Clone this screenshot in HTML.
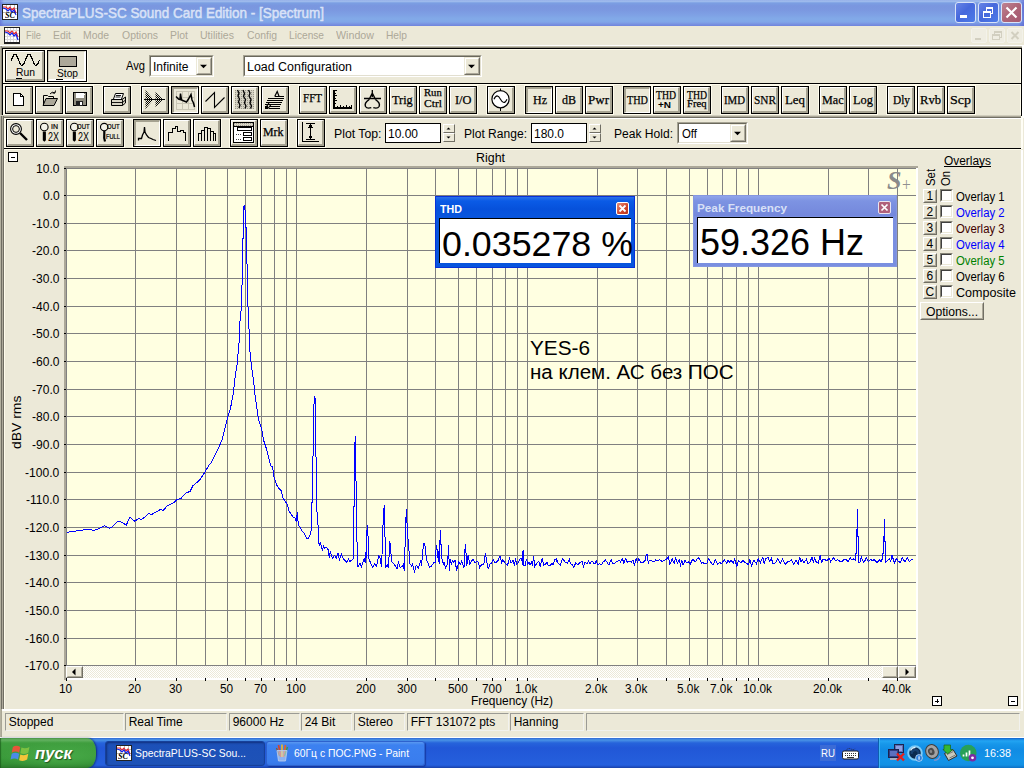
<!DOCTYPE html>
<html><head><meta charset="utf-8"><title>SpectraPLUS-SC</title>
<style>
html,body{margin:0;padding:0;}
body{width:1024px;height:768px;overflow:hidden;background:#ECE9D8;position:relative;font-family:"Liberation Sans",sans-serif;}
div,span.t,svg{position:absolute;box-sizing:border-box;}
span.t{white-space:pre;transform-origin:0 50%;display:block;}
.btn{background:#ECE9D8;border:1px solid #000;box-shadow:0 0 0 1px #FFFCEC;}
.btn:before{content:"";position:absolute;left:0;top:0;right:0;bottom:0;border-top:1px solid #fff;border-left:1px solid #fff;border-right:2px solid #A5A291;border-bottom:2px solid #A5A291;}
.btn.dn{background:#ECE9D8;}
.btn.dn:before{border-top:2px solid #A5A291;border-left:2px solid #A5A291;border-right:1px solid #fff;border-bottom:1px solid #fff;}
.btn.dn1:before{border-top:1px solid #C9C6B5;border-left:1px solid #C9C6B5;border-right:2px solid #fff;border-bottom:2px solid #fff;}
.flat{background:#fff;border:1px solid #000;}
.sunk{background:#fff;border:1px solid;border-color:#A5A292 #fff #fff #A5A292;}
.sunk:before{content:"";position:absolute;left:0;top:0;right:0;bottom:0;border:1px solid;border-color:#6A685C #E2DFD0 #E2DFD0 #6A685C;}
.cbtn{background:#ECE9D8;border:1px solid;border-color:#ECE9D8 #716F64 #716F64 #ECE9D8;}
.cbtn:before{content:"";position:absolute;left:0;top:0;right:0;bottom:0;border:1px solid;border-color:#fff #ACA899 #ACA899 #fff;}
.sp{background:#ECE9D8;border:1px solid;border-color:#fff #716F64 #716F64 #fff;}
.stp{border:1px solid;border-color:#9B9B95 #F2F2EE #F2F2EE #9B9B95;}
.chk{background:#fff;border:1px solid;border-color:#848275 #fff #fff #848275;}
.chk:before{content:"";position:absolute;left:0;top:0;right:0;bottom:0;border:1px solid;border-color:#404040 #ECE9D8 #ECE9D8 #404040;}
.sb{background:#ECE9D8;border:1px solid;border-color:#fff #716F64 #716F64 #fff;}
.sb:before{content:"";position:absolute;left:0;top:0;right:0;bottom:0;border:1px solid;border-color:#ECE9D8 #ACA899 #ACA899 #ECE9D8;}
.tbtn{border-radius:3px;border:1px solid #fff;}
</style></head><body>

<div style="left:0px;top:0px;width:1024px;height:26px;background:linear-gradient(180deg,#98B2EA 0px,#9DBAEC 1.5px,#86A8E6 2.5px,#7B9DE2 3.5px,#7A96DF 6px,#7B98E0 10px,#7E9FE4 14px,#82AAE8 19px,#80A5E8 22px,#778FE0 24.5px,#6E84DC 26px);"></div>
<div style="left:0px;top:0px;width:1024px;height:26px;background:linear-gradient(90deg,rgba(90,100,210,.6) 0px,rgba(90,100,210,0) 4px,rgba(90,100,210,0) 1018px,rgba(90,100,210,.7) 1024px);"></div>
<svg style="left:2px;top:4px" width="16" height="16" viewBox="0 0 16 16" shape-rendering="crispEdges">
<rect x="0" y="0" width="16" height="16" fill="#fff" stroke="none"/>
<path d="M0.5 0.5H15.5V15.5H0.5Z" fill="none" stroke="#222"/>
<path d="M4.5 1V9M8.5 1V9M12.5 1V9M1 4.5H15M1 8.5H15" stroke="#bbb" fill="none"/>
<polyline points="1,3 4,3 6,5 8,3 10,6 12,4 14,9" fill="none" stroke="#e22" stroke-width="1.1" shape-rendering="auto"/>
<polyline points="1,4 4,5 6,7 8,5 10,8 12,6 14,11" fill="none" stroke="#12e" stroke-width="1.2" shape-rendering="auto"/>
</svg>
<span class="t" style="left:5px;top:11.80px;font-size:8px;line-height:8px;color:#000;font-weight:bold;font-style:italic;font-family:'Liberation Serif',serif;transform:scaleX(1.0220);">SC</span>
<span class="t" style="left:22.3px;top:5.93px;font-size:14.5px;line-height:14.5px;color:#D9E2F7;transform:scaleX(0.9276);-webkit-text-stroke:.5px #D9E2F7;">SpectraPLUS-SC Sound Card Edition - [Spectrum]</span>
<div class="tbtn" style="left:955px;top:2px;width:21px;height:21px;background:linear-gradient(135deg,#6784E6 0%,#4668DC 45%,#4C7BE8 100%);border-color:#D9E3F8;"></div>
<div class="tbtn" style="left:978px;top:2px;width:21px;height:21px;background:linear-gradient(135deg,#6784E6 0%,#4668DC 45%,#4C7BE8 100%);border-color:#D9E3F8;"></div>
<div class="tbtn" style="left:1001px;top:2px;width:21px;height:21px;background:linear-gradient(135deg,#BE8392 0%,#AE6578 50%,#A55A72 100%);border-color:#D9E3F8;"></div>
<svg style="left:955px;top:2px" width="21" height="21" viewBox="0 0 21 21"><rect x="5" y="13" width="7" height="3" fill="#fff"/></svg>
<svg style="left:978px;top:2px" width="21" height="21" viewBox="0 0 21 21" shape-rendering="crispEdges"><path d="M8.500 9V6H14.500V11.500H12.500" fill="none" stroke="#fff"/><path d="M8 5.500H15" stroke="#fff"/><rect x="5.500" y="10" width="6.500" height="5" fill="none" stroke="#fff"/><path d="M5 9.500H12.500" stroke="#fff"/></svg>
<svg style="left:1001px;top:2px" width="21" height="21" viewBox="0 0 21 21"><path d="M5.5 5.5L15.5 15.5M15.5 5.5L5.5 15.5" stroke="#fff" stroke-width="2.2" fill="none"/></svg>
<svg style="left:4px;top:27px" width="16" height="17" viewBox="0 0 16 17" shape-rendering="crispEdges">
<rect x="0" y="0" width="16" height="17" fill="#fff"/>
<path d="M0.5 0.5H15.5V15.5H0.5Z" fill="none" stroke="#222"/><path d="M0 16H16" stroke="#222" stroke-width="2"/>
<path d="M3.5 1V15M6.5 1V15M9.5 1V15M12.5 1V15M1 3.5H15M1 6.5H15M1 9.5H15M1 12.5H15" stroke="#d8d8d8" fill="none"/>
<polyline points="1,4 4,4 6,6 8,4 10,7 12,5 14,10" fill="none" stroke="#e22" stroke-width="1.1" shape-rendering="auto"/>
<polyline points="1,5 4,6 6,8 8,6 10,9 12,7 14,13" fill="none" stroke="#12e" stroke-width="1.2" shape-rendering="auto"/>
</svg>
<span class="t" style="left:26px;top:29.69px;font-size:11px;line-height:11px;color:#ACA899;transform:scaleX(0.8463);">File</span>
<span class="t" style="left:53px;top:29.69px;font-size:11px;line-height:11px;color:#ACA899;transform:scaleX(0.9496);">Edit</span>
<span class="t" style="left:83px;top:29.69px;font-size:11px;line-height:11px;color:#ACA899;transform:scaleX(0.9450);">Mode</span>
<span class="t" style="left:122px;top:29.69px;font-size:11px;line-height:11px;color:#ACA899;transform:scaleX(0.9497);">Options</span>
<span class="t" style="left:170px;top:29.69px;font-size:11px;line-height:11px;color:#ACA899;transform:scaleX(0.9496);">Plot</span>
<span class="t" style="left:200px;top:29.69px;font-size:11px;line-height:11px;color:#ACA899;transform:scaleX(0.9591);">Utilities</span>
<span class="t" style="left:247px;top:29.69px;font-size:11px;line-height:11px;color:#ACA899;transform:scaleX(0.9435);">Config</span>
<span class="t" style="left:289px;top:29.69px;font-size:11px;line-height:11px;color:#ACA899;transform:scaleX(0.9232);">License</span>
<span class="t" style="left:336px;top:29.69px;font-size:11px;line-height:11px;color:#ACA899;transform:scaleX(0.9713);">Window</span>
<span class="t" style="left:386px;top:29.69px;font-size:11px;line-height:11px;color:#ACA899;transform:scaleX(0.9283);">Help</span>
<div style="left:971px;top:28px;width:16px;height:15px;background:#EFEDE2;border:1px solid #F3F2EA;border-radius:2px;"></div>
<div style="left:989px;top:28px;width:16px;height:15px;background:#EFEDE2;border:1px solid #F3F2EA;border-radius:2px;"></div>
<div style="left:1007px;top:28px;width:16px;height:15px;background:#EFEDE2;border:1px solid #F3F2EA;border-radius:2px;"></div>
<svg style="left:971px;top:28px" width="52" height="15" viewBox="0 0 52 15" shape-rendering="crispEdges"><rect x="4" y="10" width="6" height="2" fill="#D2CFC0"/><path d="M23.5 6.5V3.5H30.5V9.5H28.5M23 4.5H31" fill="none" stroke="#D2CFC0"/><rect x="21.5" y="6.5" width="7" height="5" fill="none" stroke="#D2CFC0"/><path d="M21 7.5H29" stroke="#D2CFC0"/></svg>
<svg style="left:1007px;top:28px" width="16" height="15" viewBox="0 0 16 15"><path d="M4.5 4L11.5 11M11.5 4L4.5 11" stroke="#D2CFC0" stroke-width="2" fill="none"/></svg>
<div style="left:0px;top:45px;width:1024px;height:1px;background:#fff;"></div>
<div style="left:0px;top:46px;width:1024px;height:1px;background:#C2BFAE;"></div>
<div style="left:0px;top:47px;width:1024px;height:1px;background:#8D8A7B;"></div>
<div style="left:0px;top:46px;width:1px;height:70px;background:#B5B2A1;"></div>
<div style="left:1px;top:46px;width:1px;height:70px;background:#8F8C7E;"></div>
<div style="left:2px;top:48px;width:1020px;height:68px;border:1px solid #000;border-bottom:none;background:#ECE9D8;"></div>
<div style="left:3px;top:49px;width:1018px;height:1px;background:#FFFCEC;"></div>
<div style="left:3px;top:49px;width:2px;height:66px;background:#FFFCEC;"></div>
<div style="left:1020px;top:49px;width:1px;height:66px;background:#FFFCEC;"></div>
<div style="left:1022px;top:46px;width:2px;height:72px;background:#fff;"></div>
<div style="left:3px;top:83px;width:1018px;height:1px;background:#000;"></div>
<div style="left:3px;top:84px;width:1018px;height:1px;background:#FFFCEC;"></div>
<div style="left:0px;top:115px;width:1021px;height:1px;background:#D0CDBC;"></div>
<div style="left:0px;top:116px;width:1021px;height:1px;background:#ACA899;"></div>
<div style="left:0px;top:117px;width:1021px;height:1px;background:#716F64;"></div>
<div style="left:4px;top:118px;width:1019px;height:1px;background:#fff;"></div>
<div style="left:1021px;top:116px;width:2px;height:33px;background:#FFFEF6;"></div>
<div style="left:0px;top:116px;width:1px;height:593px;background:#B5B2A1;"></div>
<div style="left:1px;top:116px;width:1px;height:593px;background:#716F64;"></div>
<div style="left:2px;top:116px;width:1px;height:593px;background:#ACA899;"></div>
<div style="left:3px;top:116px;width:1px;height:593px;background:#716F64;"></div>
<div style="left:4px;top:118px;width:2px;height:31px;background:#FFFCEC;"></div>
<div style="left:4px;top:149px;width:1px;height:560px;background:#FFFCEC;"></div>
<div style="left:4px;top:148px;width:1017px;height:1px;background:#000;"></div>
<div style="left:5px;top:149px;width:1016px;height:1px;background:#FFFCEC;"></div>
<div class="btn" style="left:5px;top:50px;width:40px;height:32px;"></div>
<svg style="left:0px;top:0px" width="50" height="82" viewBox="0 0 50 82"><polyline points="11.0,61.01 11.5,59.75 12.0,58.49 12.5,57.30 13.0,56.23 13.5,55.33 14.0,54.66 14.5,54.24 15.0,54.10 15.5,54.24 16.0,54.66 16.5,55.33 17.0,56.23 17.5,57.30 18.0,58.49 18.5,59.75 19.0,61.01 19.5,62.20 20.0,63.27 20.5,64.17 21.0,64.84 21.5,65.26 22.0,65.40 22.5,65.26 23.0,64.84 23.5,64.17 24.0,63.27 24.5,62.20 25.0,61.01 25.5,59.75 26.0,58.49 26.5,57.30 27.0,56.23 27.5,55.33 28.0,54.66 28.5,54.24 29.0,54.10 29.5,54.24 30.0,54.66 30.5,55.33 31.0,56.23 31.5,57.30 32.0,58.49 32.5,59.75 33.0,61.01 33.5,62.20 34.0,63.27 34.5,64.17 35.0,64.84 35.5,65.26 36.0,65.40 36.5,65.26 37.0,64.84 37.5,64.17 38.0,63.27 38.5,62.20 39.0,61.01 39.5,59.75" fill="none" stroke="#000" stroke-width="1.15" shape-rendering="crispEdges"/></svg>
<span class="t" style="left:16px;top:67.07px;font-size:11.5px;line-height:11.5px;color:#000;transform:scaleX(0.9007);">Run</span>
<div style="left:16px;top:78px;width:6px;height:1px;background:#000;"></div>
<div class="btn dn dn1" style="left:47px;top:50px;width:40px;height:32px;"></div>
<div style="left:59px;top:56px;width:18px;height:11px;background:#ACA899;border:1px solid #000;"></div>
<span class="t" style="left:56.7px;top:67.97px;font-size:11.5px;line-height:11.5px;color:#000;transform:scaleX(0.8877);">Stop</span>
<div style="left:56px;top:79px;width:7px;height:1px;background:#000;"></div>
<span class="t" style="left:126px;top:59.84px;font-size:12px;line-height:12px;color:#000;transform:scaleX(0.9286);">Avg</span>
<div class="sunk" style="left:149px;top:55px;width:65px;height:22px;"></div>
<span class="t" style="left:153px;top:60.84px;font-size:12px;line-height:12px;color:#000;transform:scaleX(1.0042);">Infinite</span>
<div class="cbtn" style="left:196px;top:57px;width:16px;height:18px;"></div>
<svg style="left:196px;top:57px" width="16" height="18" viewBox="0 0 16 18"><path d="M4 7.700H11L7.500 11.200Z" fill="#000"/></svg>
<div class="sunk" style="left:243px;top:55px;width:239px;height:22px;"></div>
<span class="t" style="left:247px;top:60.84px;font-size:12px;line-height:12px;color:#000;transform:scaleX(1.0355);">Load Configuration</span>
<div class="cbtn" style="left:464px;top:57px;width:16px;height:18px;"></div>
<svg style="left:464px;top:57px" width="16" height="18" viewBox="0 0 16 18"><path d="M4 7.700H11L7.500 11.200Z" fill="#000"/></svg>
<div class="btn" style="left:5px;top:86px;width:28px;height:28px;"></div>
<div class="btn" style="left:35px;top:86px;width:28px;height:28px;"></div>
<div class="btn" style="left:65px;top:86px;width:28px;height:28px;"></div>
<div class="btn" style="left:103px;top:86px;width:28px;height:28px;"></div>
<div class="btn" style="left:141px;top:86px;width:28px;height:28px;"></div>
<div class="btn dn" style="left:171px;top:86px;width:28px;height:28px;"></div>
<div class="btn" style="left:201px;top:86px;width:28px;height:28px;"></div>
<div class="btn" style="left:231px;top:86px;width:28px;height:28px;"></div>
<div class="btn" style="left:261px;top:86px;width:28px;height:28px;"></div>
<div class="btn" style="left:299px;top:86px;width:28px;height:28px;"></div>
<div class="btn" style="left:329px;top:86px;width:28px;height:28px;"></div>
<div class="btn" style="left:359px;top:86px;width:28px;height:28px;"></div>
<div class="btn" style="left:389px;top:86px;width:28px;height:28px;"></div>
<div class="btn" style="left:419px;top:86px;width:28px;height:28px;"></div>
<div class="btn" style="left:449px;top:86px;width:28px;height:28px;"></div>
<div class="btn" style="left:487px;top:86px;width:28px;height:28px;"></div>
<div class="btn dn" style="left:525px;top:86px;width:28px;height:28px;"></div>
<div class="btn" style="left:555px;top:86px;width:28px;height:28px;"></div>
<div class="btn" style="left:585px;top:86px;width:28px;height:28px;"></div>
<div class="btn dn" style="left:623px;top:86px;width:28px;height:28px;"></div>
<div class="btn" style="left:653px;top:86px;width:28px;height:28px;"></div>
<div class="btn" style="left:683px;top:86px;width:28px;height:28px;"></div>
<div class="btn" style="left:721px;top:86px;width:28px;height:28px;"></div>
<div class="btn" style="left:751px;top:86px;width:28px;height:28px;"></div>
<div class="btn" style="left:781px;top:86px;width:28px;height:28px;"></div>
<div class="btn" style="left:819px;top:86px;width:28px;height:28px;"></div>
<div class="btn" style="left:849px;top:86px;width:28px;height:28px;"></div>
<div class="btn" style="left:887px;top:86px;width:28px;height:28px;"></div>
<div class="btn" style="left:917px;top:86px;width:28px;height:28px;"></div>
<div class="btn" style="left:947px;top:86px;width:28px;height:28px;"></div>
<svg style="left:5px;top:86px" width="28" height="28" viewBox="0 0 28 28" shape-rendering="crispEdges"><path d="M8.5 7.5H15.5L18.5 10.5V19.5H8.5Z" fill="#fff" stroke="#000"/><path d="M15.5 7.5V10.5H18.5" fill="none" stroke="#000"/></svg>
<svg style="left:35px;top:85px" width="28" height="28" viewBox="0 0 28 28"><path d="M8 20.5L11 13.5H22.5L19 20.5Z" fill="#ACA899" stroke="#000"/><path d="M8.5 20V10.5H12.5L13.5 11.5H18.5V13" fill="none" stroke="#000"/><path d="M15 9Q17 6 20 8M20 8L20.5 5.5M20 8L17.5 8" fill="none" stroke="#000"/></svg>
<svg style="left:64.5px;top:85px" width="28" height="28" viewBox="0 0 28 28" shape-rendering="crispEdges"><rect x="8.5" y="7.5" width="13" height="13" fill="#8F8C7E" stroke="#000"/><rect x="10.500" y="8" width="8" height="5" fill="#fff"/><rect x="11" y="16" width="7" height="4.5" fill="#222"/><rect x="15" y="17" width="2" height="3" fill="#fff"/><rect x="19" y="9" width="1" height="1" fill="#fff"/></svg>
<svg style="left:103px;top:86px" width="28" height="28" viewBox="0 0 28 28"><path d="M10.5 13L12.5 7.5H20.500L18.500 13" fill="#fff" stroke="#000"/><path d="M8.5 13.5H19L22.500 11V17L19.500 19.500H8.5Z" fill="#D8D5C6" stroke="#000"/><path d="M8.5 16.5H19.500L22.500 14M19.500 13.5V19.500M13 9.500H18M12.500 11H17.500" fill="none" stroke="#000" stroke-width=".9"/></svg>
<svg style="left:141px;top:86px" width="28" height="28" viewBox="0 0 28 28"><path d="M3 13.500H24" stroke="#000" shape-rendering="crispEdges"/><path d="M4.500 4L12.500 13.500L4.500 23Z M14.500 6L22 13.500L14.500 21Z" fill="url(#hx)" stroke="none"/><defs><pattern id="hx" width="2" height="2" patternUnits="userSpaceOnUse"><rect width="1" height="1" fill="#000"/><rect x="1" y="1" width="1" height="1" fill="#000"/></pattern></defs></svg>
<svg style="left:171px;top:86px" width="28" height="28" viewBox="0 0 28 28"><rect x="5.500" y="5.500" width="18" height="18" fill="#ECE9D8" stroke="#C9C6B5" shape-rendering="crispEdges"/><path d="M11.500 5V23M17.500 5V23M5 11.500H23M5 17.500H23" stroke="#C9C6B5" fill="none" shape-rendering="crispEdges"/><polyline points="5,10.500 7.500,13 9,13.500 9.500,7.500 10.500,14 13,15 15.500,16 17.500,13 20,8.500 21,14 22.500,17 23.500,21" fill="none" stroke="#000" stroke-width="1.500"/></svg>
<svg style="left:201px;top:86px" width="28" height="28" viewBox="0 0 28 28"><polyline points="4.500,15.500 13.500,6.500 13.500,21.500 23.500,11.500" fill="none" stroke="#000" stroke-width="1.1"/></svg>
<svg style="left:231px;top:86px" width="28" height="28" viewBox="0 0 28 28"><rect x="4" y="4" width="19" height="19" fill="url(#dz)"/><defs><pattern id="dz" width="2" height="2" patternUnits="userSpaceOnUse"><rect width="2" height="2" fill="#D6D3C4"/><rect width="1" height="1" fill="#9A978A"/></pattern></defs><path d="M6.500 4L8 7L7 10L8.500 13L7.500 16L9 19L8 22M12 4L13.500 7.500L12.500 10.500L14.500 13.500L13.500 17L15 20L14 22.500M17.500 4L19 7L18 10L20 13.500L19 17L20.500 20L19.500 22.500" fill="none" stroke="#000" stroke-width="1.300"/></svg>
<svg style="left:261px;top:86px" width="28" height="28" viewBox="0 0 28 28"><path d="M13.700 10.500H22.500M6.900 12.500H23M5.600 14.500H22M5 16.500H21.200M4.400 18.500H20M8.700 20.500H19.400M7.500 22.500H18.700" stroke="#000" fill="none" shape-rendering="crispEdges"/><path d="M13.700 10.500L16.200 5.500L18.100 10.500M4.500 22L8 17M7 22.500L10 18.500" fill="none" stroke="#000" stroke-width="1.200"/><rect x="4" y="20" width="3" height="3" fill="#000"/></svg>
<span class="t" style="left:303px;top:93.17px;font-size:11.5px;line-height:11.5px;color:#000;font-family:'Liberation Serif',serif;transform:scaleX(0.9589);-webkit-text-stroke:.25px #000;">FFT</span>
<svg style="left:329px;top:86px" width="28" height="28" viewBox="0 0 28 28" shape-rendering="crispEdges"><path d="M5 4V22.500M4.500 22H23" stroke="#000" stroke-width="1.500" fill="none"/><path d="M5 4.500H8M5 7.500H7M5 9.500H8M5 12.500H7M5 14.500H8M5 17.500H7M8.500 22V20M11.500 22V19M14.500 22V20M17.500 22V19M20.500 22V20M22.500 22V19" fill="none" stroke="#000"/></svg>
<svg style="left:359px;top:86px" width="28" height="28" viewBox="0 0 28 28"><path d="M13.300 4V11M5 12.500H22M13.300 7L10 13.600M13.300 7L16.600 13.600" fill="none" stroke="#000" stroke-width="1.300"/><path d="M10 13.600Q5 17 6.500 20.500Q8 23 12.300 21.700M16.600 13.600Q21.600 17 20.100 20.500Q18.600 23 14.300 21.700" fill="none" stroke="#000" stroke-width="1.400"/></svg>
<span class="t" style="left:392.3px;top:93.53px;font-size:12.5px;line-height:12.5px;color:#000;font-family:'Liberation Serif',serif;transform:scaleX(0.9820);-webkit-text-stroke:.25px #000;">Trig</span>
<span class="t" style="left:424.3px;top:88.41px;font-size:10.5px;line-height:10.5px;color:#000;font-family:'Liberation Serif',serif;transform:scaleX(1.0169);-webkit-text-stroke:.25px #000;">Run</span>
<span class="t" style="left:424px;top:98.91px;font-size:10.5px;line-height:10.5px;color:#000;font-family:'Liberation Serif',serif;transform:scaleX(1.1020);-webkit-text-stroke:.25px #000;">Ctrl</span>
<span class="t" style="left:454.5px;top:93.53px;font-size:12.5px;line-height:12.5px;color:#000;font-family:'Liberation Serif',serif;transform:scaleX(0.9903);-webkit-text-stroke:.25px #000;">I/O</span>
<svg style="left:487px;top:86px" width="28" height="28" viewBox="0 0 28 28"><circle cx="13.500" cy="13.200" r="8.600" fill="#fff" stroke="#000" stroke-width="1.2"/><path d="M13.500 2.500V5M13.500 22V25" stroke="#000"/><path d="M7 13.200Q10 6.500 13.500 13.200T20 13.200" fill="none" stroke="#000" stroke-width="1.1"/></svg>
<span class="t" style="left:533.3px;top:93.53px;font-size:12.5px;line-height:12.5px;color:#000;font-family:'Liberation Serif',serif;transform:scaleX(0.9605);-webkit-text-stroke:.25px #000;">Hz</span>
<span class="t" style="left:561.5px;top:93.53px;font-size:12.5px;line-height:12.5px;color:#000;font-family:'Liberation Serif',serif;transform:scaleX(0.9597);-webkit-text-stroke:.25px #000;">dB</span>
<span class="t" style="left:588px;top:93.53px;font-size:12.5px;line-height:12.5px;color:#000;font-family:'Liberation Serif',serif;transform:scaleX(1.0427);-webkit-text-stroke:.25px #000;">Pwr</span>
<span class="t" style="left:627px;top:93.53px;font-size:12.5px;line-height:12.5px;color:#000;font-family:'Liberation Serif',serif;transform:scaleX(0.8175);-webkit-text-stroke:.25px #000;">THD</span>
<span class="t" style="left:724px;top:93.53px;font-size:12.5px;line-height:12.5px;color:#000;font-family:'Liberation Serif',serif;transform:scaleX(0.8640);-webkit-text-stroke:.25px #000;">IMD</span>
<span class="t" style="left:754px;top:93.53px;font-size:12.5px;line-height:12.5px;color:#000;font-family:'Liberation Serif',serif;transform:scaleX(0.9047);-webkit-text-stroke:.25px #000;">SNR</span>
<span class="t" style="left:785px;top:93.53px;font-size:12.5px;line-height:12.5px;color:#000;font-family:'Liberation Serif',serif;transform:scaleX(1.0291);-webkit-text-stroke:.25px #000;">Leq</span>
<span class="t" style="left:822px;top:93.53px;font-size:12.5px;line-height:12.5px;color:#000;font-family:'Liberation Serif',serif;transform:scaleX(0.9679);-webkit-text-stroke:.25px #000;">Mac</span>
<span class="t" style="left:853px;top:93.53px;font-size:12.5px;line-height:12.5px;color:#000;font-family:'Liberation Serif',serif;transform:scaleX(0.9933);-webkit-text-stroke:.25px #000;">Log</span>
<span class="t" style="left:893px;top:93.53px;font-size:12.5px;line-height:12.5px;color:#000;font-family:'Liberation Serif',serif;transform:scaleX(0.9067);-webkit-text-stroke:.25px #000;">Dly</span>
<span class="t" style="left:920px;top:93.53px;font-size:12.5px;line-height:12.5px;color:#000;font-family:'Liberation Serif',serif;transform:scaleX(1.0078);-webkit-text-stroke:.25px #000;">Rvb</span>
<span class="t" style="left:950px;top:93.53px;font-size:12.5px;line-height:12.5px;color:#000;font-family:'Liberation Serif',serif;transform:scaleX(1.1200);-webkit-text-stroke:.25px #000;">Scp</span>
<span class="t" style="left:656.3px;top:88.75px;font-size:12px;line-height:12px;color:#000;font-family:'Liberation Serif',serif;transform:scaleX(0.8110);-webkit-text-stroke:.25px #000;">THD</span>
<span class="t" style="left:658px;top:101.20px;font-size:8.5px;line-height:8.5px;color:#000;font-weight:bold;transform:scaleX(1.1708);">+N</span>
<span class="t" style="left:687.3px;top:88.55px;font-size:12px;line-height:12px;color:#000;font-family:'Liberation Serif',serif;transform:scaleX(0.8110);-webkit-text-stroke:.25px #000;">THD</span>
<span class="t" style="left:687.3px;top:99.22px;font-size:10px;line-height:10px;color:#000;font-family:'Liberation Serif',serif;transform:scaleX(1.0693);-webkit-text-stroke:.25px #000;">Freq</span>
<div class="btn" style="left:6px;top:119px;width:28px;height:28px;"></div>
<div class="btn" style="left:36px;top:119px;width:28px;height:28px;"></div>
<div class="btn" style="left:66px;top:119px;width:28px;height:28px;"></div>
<div class="btn" style="left:96px;top:119px;width:28px;height:28px;"></div>
<div class="btn dn" style="left:133px;top:119px;width:28px;height:28px;"></div>
<div class="btn" style="left:163px;top:119px;width:28px;height:28px;"></div>
<div class="btn" style="left:193px;top:119px;width:28px;height:28px;"></div>
<div class="btn" style="left:230px;top:119px;width:28px;height:28px;"></div>
<div class="btn" style="left:260px;top:119px;width:28px;height:28px;"></div>
<div class="btn" style="left:297px;top:119px;width:28px;height:28px;"></div>
<svg style="left:6px;top:119px" width="28" height="28" viewBox="0 0 28 28"><path d="M14 14L21 21" stroke="#000" stroke-width="2.400" fill="none"/><circle cx="10" cy="10" r="5.400" fill="#fff" stroke="#000" stroke-width="1.100"/><circle cx="10" cy="10" r="3.400" fill="#ECE9D8" stroke="#000" stroke-width="1"/></svg>
<svg style="left:36px;top:119px" width="28" height="28" viewBox="0 0 28 28"><path d="M6.800 12.500H9.900V21.300L8.350 22.800L6.800 21.300Z" fill="#000"/><circle cx="8.300" cy="8" r="3.800" fill="#F4F3EA" stroke="#000" stroke-width="1.100"/></svg>
<span class="t" style="left:51px;top:123.83px;font-size:6.7px;line-height:6.7px;color:#000;transform:scaleX(1.0448);-webkit-text-stroke:.2px #000;">IN</span>
<span class="t" style="left:48px;top:131.44px;font-size:12px;line-height:12px;color:#000;transform:scaleX(0.7494);">2X</span>
<svg style="left:66px;top:119px" width="28" height="28" viewBox="0 0 28 28"><path d="M6.800 12.500H9.900V21.300L8.350 22.800L6.800 21.300Z" fill="#000"/><circle cx="8.300" cy="8" r="3.800" fill="#F4F3EA" stroke="#000" stroke-width="1.100"/></svg>
<span class="t" style="left:77.2px;top:123.93px;font-size:6.7px;line-height:6.7px;color:#000;transform:scaleX(0.8909);-webkit-text-stroke:.2px #000;">OUT</span>
<span class="t" style="left:78px;top:131.44px;font-size:12px;line-height:12px;color:#000;transform:scaleX(0.7494);">2X</span>
<svg style="left:96px;top:119px" width="28" height="28" viewBox="0 0 28 28"><path d="M8.300 12L8.300 15Q7.800 18.500 9 22.500" stroke="#000" stroke-width="2.200" fill="none"/><circle cx="8.200" cy="8.100" r="3.700" fill="#F4F3EA" stroke="#000" stroke-width="1.100"/></svg>
<span class="t" style="left:107.2px;top:123.93px;font-size:6.7px;line-height:6.7px;color:#000;transform:scaleX(0.8909);-webkit-text-stroke:.2px #000;">OUT</span>
<span class="t" style="left:106.2px;top:132.97px;font-size:7px;line-height:7px;color:#000;transform:scaleX(0.8063);-webkit-text-stroke:.2px #000;">FULL</span>
<svg style="left:133px;top:119px" width="28" height="28" viewBox="0 0 28 28"><polyline points="5.500,21.500 5.500,19.500 8.500,19.500 9.500,16 11,13 11.500,8 12,13 13.500,16 15.500,18.500 18,19.500 20,20.500 23,21.500" fill="none" stroke="#000" stroke-width="1.300"/></svg>
<svg style="left:163px;top:119px" width="28" height="28" viewBox="0 0 28 28" shape-rendering="crispEdges"><path d="M5.500 22V13.500H9.500V9.500H12.500V7.500H14.500V12.500H17.500V11H20.500V13.500H22.500V22" fill="none" stroke="#000"/></svg>
<svg style="left:193px;top:119px" width="28" height="28" viewBox="0 0 28 28" shape-rendering="crispEdges"><path d="M5.500 22V14.500H8.500V22M8.500 14.500V11.500H11.500V22M11.500 11.500V8.500H14.500V22M14.500 9.500H17.500V22M17.500 12.500H20.500V22M20.500 14.500H22.500V22" fill="none" stroke="#000"/></svg>
<svg style="left:230px;top:119px" width="28" height="28" viewBox="0 0 28 28" shape-rendering="crispEdges"><rect x="3.500" y="3.500" width="20" height="20" fill="#fff" stroke="#000"/><rect x="4" y="4" width="19" height="3" fill="url(#dz)"/><path d="M4 7.500H23" stroke="#000"/><rect x="7.500" y="8.500" width="14" height="3" fill="#fff" stroke="#000"/><rect x="13.500" y="13.500" width="8" height="3" fill="#fff" stroke="#000"/><rect x="13.500" y="18.500" width="8" height="3" fill="#fff" stroke="#000"/><path d="M6 15.500H11M6 20.500H11" stroke="#444" stroke-dasharray="1 1"/></svg>
<span class="t" style="left:263.3px;top:126.45px;font-size:12px;line-height:12px;color:#000;font-family:'Liberation Serif',serif;transform:scaleX(0.9920);-webkit-text-stroke:.25px #000;">Mrk</span>
<svg style="left:297px;top:119px" width="28" height="28" viewBox="0 0 28 28" shape-rendering="crispEdges"><path d="M5.500 3V22.500H21.500" fill="none" stroke="#000"/><path d="M9 4.500H18M9 20.500H18M13.500 5V20" stroke="#000" fill="none"/><path d="M13.500 5L11 8.500H16ZM13.500 20L11 16.500H16Z" fill="#000"/></svg>
<span class="t" style="left:334px;top:127.84px;font-size:12px;line-height:12px;color:#000;transform:scaleX(1.0221);">Plot Top:</span>
<div class="flat" style="left:385px;top:123px;width:56px;height:20px;"></div>
<span class="t" style="left:388px;top:127.64px;font-size:12px;line-height:12px;color:#000;transform:scaleX(0.9991);">10.00</span>
<span class="t" style="left:464px;top:127.84px;font-size:12px;line-height:12px;color:#000;transform:scaleX(1.0047);">Plot Range:</span>
<div class="flat" style="left:531px;top:123px;width:56px;height:20px;"></div>
<span class="t" style="left:534px;top:127.64px;font-size:12px;line-height:12px;color:#000;transform:scaleX(0.9991);">180.0</span>
<div class="sp" style="left:443px;top:124px;width:12px;height:9px;"></div>
<div class="sp" style="left:443px;top:133px;width:12px;height:9px;"></div>
<svg style="left:443px;top:124px" width="12" height="18" viewBox="0 0 12 18"><path d="M3.500 5.500H7.500L5.500 3.500Z M3.500 12.500H7.500L5.500 14.500Z" fill="#000"/></svg>
<div class="sp" style="left:589px;top:124px;width:12px;height:9px;"></div>
<div class="sp" style="left:589px;top:133px;width:12px;height:9px;"></div>
<svg style="left:589px;top:124px" width="12" height="18" viewBox="0 0 12 18"><path d="M3.500 5.500H7.500L5.500 3.500Z M3.500 12.500H7.500L5.500 14.500Z" fill="#000"/></svg>
<span class="t" style="left:614px;top:127.84px;font-size:12px;line-height:12px;color:#000;transform:scaleX(1.0052);">Peak Hold:</span>
<div class="sunk" style="left:677px;top:122px;width:71px;height:22px;"></div>
<span class="t" style="left:681.5px;top:127.64px;font-size:12px;line-height:12px;color:#000;transform:scaleX(0.9503);">Off</span>
<div class="cbtn" style="left:730px;top:124px;width:16px;height:18px;"></div>
<svg style="left:730px;top:124px" width="16" height="18" viewBox="0 0 16 18"><path d="M4 7.700H11L7.500 11.200Z" fill="#000"/></svg>
<div style="left:1021px;top:150px;width:2px;height:559px;background:#fff;"></div>
<div style="left:8px;top:152px;width:10px;height:10px;border:1px solid #000;background:#fff;"></div>
<div style="left:11px;top:156.5px;width:4px;height:1px;background:#000;"></div>
<span class="t" style="left:476px;top:151.84px;font-size:12px;line-height:12px;color:#000;transform:scaleX(1.0353);">Right</span>
<div style="left:64px;top:166px;width:854px;height:514px;background:#ACA899;"></div>
<div style="left:66px;top:168px;width:852px;height:512px;background:#fff;"></div>
<div style="left:66px;top:168px;width:850px;height:510px;background:#808080;"></div>
<div style="left:67px;top:169px;width:849px;height:496px;background:#FFFFE1;"></div>
<svg style="left:60px;top:160px" width="860" height="525" viewBox="60 160 860 525"><path d="M135.5 169V665M176.5 169V665M205.5 169V665M227.5 169V665M245.5 169V665M261.5 169V665M274.5 169V665M286.5 169V665M296.5 169V665M366.5 169V665M407.5 169V665M435.5 169V665M458.5 169V665M476.5 169V665M492.5 169V665M505.5 169V665M517.5 169V665M527.5 169V665M597.5 169V665M637.5 169V665M666.5 169V665M689.5 169V665M707.5 169V665M722.5 169V665M736.5 169V665M748.5 169V665M758.5 169V665M828.5 169V665M868.5 169V665M897.5 169V665M67 195.5H916M67 223.5H916M67 250.5H916M67 278.5H916M67 306.5H916M67 333.5H916M67 361.5H916M67 389.5H916M67 416.5H916M67 444.5H916M67 472.5H916M67 499.5H916M67 527.5H916M67 555.5H916M67 582.5H916M67 610.5H916M67 638.5H916" stroke="#808080" stroke-width="1" fill="none" shape-rendering="crispEdges"/><path d="M64 168.5H66M64 195.5H66M64 223.5H66M64 250.5H66M64 278.5H66M64 306.5H66M64 333.5H66M64 361.5H66M64 389.5H66M64 416.5H66M64 444.5H66M64 472.5H66M64 499.5H66M64 527.5H66M64 555.5H66M64 582.5H66M64 610.5H66M64 638.5H66M64 665.5H66" stroke="#000" stroke-width="1" fill="none" shape-rendering="crispEdges"/><polyline points="66.7,532.2 71.7,531.7 85.0,529.7 90.8,529.7 93.3,530.5 97.5,529.2 104.2,525.8 109.5,528.3 112.5,526.7 117.5,521.7 120.0,521.3 126.3,525.0 130.0,517.2 134.7,521.3 138.7,518.3 141.2,519.7 145.0,517.0 148.8,513.3 151.2,514.7 160.8,509.2 163.3,510.5 167.5,505.5 173.3,503.0 177.2,499.5 180.8,498.7 186.2,492.5 190.0,491.7 192.8,485.8 199.2,480.5 202.8,475.5 205.8,470.5 208.8,465.3 211.3,462.5 216.7,451.7 221.7,440.8 226.2,423.4 227.9,416.7 230.5,408.2 233.4,393.0 235.0,377.7 237.2,364.2 238.1,353.2 239.5,337.0 239.5,323.5 240.3,320.0 240.3,311.5 241.1,311.0 241.3,285.7 242.3,284.8 242.3,239.1 243.3,238.0 243.3,209.5 244.3,205.2 245.4,212.9 245.7,227.2 246.6,227.6 246.6,263.6 247.4,264.1 247.6,306.5 248.6,307.2 248.6,320.0 249.1,330.3 249.6,348.1 250.8,360.8 253.8,382.8 255.0,394.7 258.3,418.3 259.3,421.8 261.5,428.5 263.5,440.0 265.8,446.7 270.8,465.8 272.5,466.7 274.2,478.3 277.5,486.7 281.3,490.8 282.8,497.9 287.2,504.2 289.1,511.3 293.0,517.0 295.5,518.3 296.2,521.5 297.4,511.9 298.3,525.3 300.6,527.8 302.5,531.7 304.4,533.6 306.4,538.0 308.3,538.7 310.2,534.9 311.5,528.5 311.5,503.0 312.4,502.3 312.4,456.7 313.4,455.8 313.4,414.2 314.4,397.0 315.5,399.2 315.5,456.7 316.6,457.5 316.6,511.9 317.5,512.5 317.8,524.7 318.5,525.3 318.5,541.2 319.5,545.7 320.1,542.1 322.6,550.8 323.3,545.3 324.9,548.3 326.1,547.0 328.1,549.5 329.3,557.8 330.2,551.4 332.5,558.5 334.4,555.3 336.3,558.1 338.0,553.1 339.5,560.4 341.2,554.0 343.4,559.1 346.6,562.3 348.5,559.1 349.7,561.7 352.9,559.1 353.6,556.5 353.6,506.8 354.5,506.2 354.5,447.5 355.5,436.2 355.5,480.8 356.7,481.7 356.8,541.9 357.7,542.5 358.0,567.4 359.9,562.9 361.6,566.8 363.8,559.7 364.7,561.7 365.7,552.1 365.9,562.9 366.6,533.6 367.6,524.9 368.2,541.2 368.9,559.1 372.7,567.4 374.6,563.6 376.5,566.1 378.7,555.9 379.7,556.5 381.6,567.4 382.5,540.0 383.5,510.6 384.6,505.1 384.6,536.1 385.5,537.4 385.5,567.4 387.1,564.8 388.7,568.0 389.5,541.2 390.6,545.1 391.3,561.0 393.8,563.6 397.0,568.7 398.3,562.3 400.2,567.4 402.0,566.8 403.4,564.2 404.3,570.6 405.3,537.4 406.3,509.3 407.2,525.9 407.5,538.7 408.5,539.3 408.9,550.8 409.8,551.4 409.8,563.6 411.7,566.1 412.7,564.2 414.5,572.5 415.5,566.8 416.8,565.5 418.3,568.0 420.6,561.0 421.5,565.5 422.5,554.0 423.6,543.2 424.5,543.8 425.5,548.9 426.4,559.1 429.6,567.4 431.5,566.1 434.0,562.3 435.3,562.3 436.3,545.1 437.5,552.1 437.9,557.8 438.5,551.4 439.1,563.6 440.4,530.1 441.0,545.1 441.4,543.8 442.1,560.4 443.6,564.2 444.2,561.7 445.5,568.0 447.2,564.2 448.1,555.3 448.4,545.1 449.0,559.1 449.3,570.6 450.0,559.1 451.2,564.2 452.5,560.4 453.8,562.3 455.1,560.4 456.6,570.6 457.6,566.8 458.9,561.7 460.2,564.8 461.7,561.0 464.0,567.4 465.3,543.8 466.3,556.5 466.8,565.5 468.1,555.3 469.7,564.2 472.9,559.1 474.8,562.9 476.8,561.0 478.0,561.7 479.7,567.4 481.9,564.2 483.8,564.8 485.4,553.0 487.0,562.9 488.2,568.7 490.2,563.6 491.5,563.6 493.1,559.4 495.3,562.9 497.8,561.0 500.0,555.9 501.6,562.9 502.9,559.7 505.5,563.6 507.4,565.5 509.5,558.5 511.2,562.9 513.1,560.4 514.4,564.8 515.7,559.7 516.9,564.2 518.9,561.7 520.0,558.8 521.9,558.8 522.2,565.0 523.1,550.0 523.8,565.0 525.6,565.0 526.2,558.8 527.8,563.8 529.0,561.9 530.2,565.0 531.5,562.5 532.5,566.2 533.5,556.0 534.8,566.2 536.9,563.1 538.8,561.2 540.2,566.2 542.2,558.8 543.8,565.0 545.6,564.4 546.9,561.9 548.1,565.0 550.0,566.2 551.9,563.1 553.1,565.0 555.0,558.8 556.2,560.6 556.5,558.5 558.1,563.1 560.2,565.0 562.5,558.8 565.0,561.9 567.5,563.1 569.4,559.4 570.6,563.8 572.2,564.4 573.8,567.2 575.6,563.1 578.1,564.4 580.0,562.5 581.9,561.2 583.5,566.5 585.0,561.9 586.9,563.8 588.5,561.2 590.0,563.8 591.9,561.0 593.8,563.1 595.0,563.8 596.2,560.6 597.5,564.4 600.0,563.8 601.2,565.0 603.1,562.2 605.6,560.0 607.5,563.1 609.0,565.0 611.2,559.4 612.5,563.1 615.0,563.1 616.9,561.2 619.4,560.6 620.6,561.9 622.5,558.8 623.8,563.1 625.6,558.8 627.5,562.5 629.4,561.2 631.2,562.2 633.1,560.0 634.4,565.0 636.2,558.8 637.5,561.9 638.8,558.8 640.6,562.5 643.1,562.5 645.0,560.6 646.2,555.0 647.3,554.8 648.2,563.0 649.5,560.1 652.0,561.1 654.5,561.6 655.8,559.9 657.4,561.0 659.9,559.7 662.4,561.7 664.3,560.2 666.2,559.5 668.4,557.1 670.0,564.4 672.2,559.0 674.1,563.4 675.4,558.2 677.6,563.2 679.2,559.8 680.5,565.1 681.8,560.5 683.1,565.0 685.0,560.5 686.3,562.7 688.5,561.8 690.4,563.7 692.9,558.9 695.1,562.0 697.3,558.8 698.9,557.6 701.4,563.1 702.7,562.5 704.6,564.0 706.8,563.9 708.4,558.3 710.3,561.4 712.2,564.0 713.5,564.2 715.4,559.6 717.6,564.0 719.8,562.7 721.7,563.6 724.2,559.7 726.7,563.3 728.0,559.9 729.3,562.1 731.2,560.4 733.1,563.3 734.7,559.0 736.9,566.5 738.5,560.3 740.7,562.7 743.2,560.1 744.5,562.1 747.0,563.6 748.6,564.7 749.9,559.6 751.5,565.5 754.0,560.2 756.5,564.0 758.1,558.6 760.3,562.9 762.8,557.5 764.4,564.1 765.7,558.5 768.2,557.2 769.5,561.1 771.4,558.4 773.0,563.7 775.5,562.8 777.7,558.8 780.2,563.4 782.7,559.1 785.2,564.3 787.7,561.6 789.0,561.7 791.5,559.7 793.7,564.5 795.9,560.1 798.1,564.1 799.7,556.7 801.0,561.7 802.3,559.3 803.9,562.9 806.4,559.4 808.0,563.7 809.6,562.6 812.1,557.2 813.4,562.0 814.7,557.7 816.3,562.3 818.2,563.3 820.1,555.4 821.4,562.6 823.0,559.6 824.9,559.5 827.1,561.0 829.0,557.9 830.6,561.8 832.2,559.8 833.5,558.0 835.7,560.7 837.6,559.6 839.8,561.1 842.0,561.7 843.9,559.8 846.4,559.5 848.0,561.8 850.2,557.8 851.5,559.9 854.0,558.8 855.5,560.0 855.5,554.0 856.5,553.5 856.5,529.0 857.5,529.0 857.5,509.0 857.5,536.0 858.5,536.0 858.5,562.0 859.7,562.8 861.3,557.2 863.8,562.8 866.3,557.9 868.2,561.6 870.7,559.5 872.6,560.9 873.9,559.3 875.5,560.8 877.1,562.7 879.6,559.8 881.2,561.6 882.2,559.0 882.6,553.0 883.5,553.0 883.5,536.0 884.5,536.0 884.5,519.0 884.5,541.0 885.5,541.0 885.5,562.0 886.6,561.7 889.1,558.7 890.7,561.5 892.0,555.5 894.5,563.0 896.1,558.4 898.0,561.0 900.2,562.4 902.4,557.8 904.9,562.1 907.1,557.7 909.6,561.7 911.5,559.7 913.5,559.5" fill="none" stroke="#0000FF" stroke-width="1" stroke-linejoin="miter" shape-rendering="crispEdges"/></svg>
<span class="t" style="left:36.03010937500001px;top:162.54px;font-size:12px;line-height:12px;color:#000;transform:scaleX(1.0050);">10.0</span>
<span class="t" style="left:42.7366px;top:189.54px;font-size:12px;line-height:12px;color:#000;transform:scaleX(1.0050);">0.0</span>
<span class="t" style="left:32.014506250000004px;top:217.54px;font-size:12px;line-height:12px;color:#000;transform:scaleX(1.0050);">-10.0</span>
<span class="t" style="left:32.014506250000004px;top:244.54px;font-size:12px;line-height:12px;color:#000;transform:scaleX(1.0050);">-20.0</span>
<span class="t" style="left:32.014506250000004px;top:272.54px;font-size:12px;line-height:12px;color:#000;transform:scaleX(1.0050);">-30.0</span>
<span class="t" style="left:32.014506250000004px;top:300.54px;font-size:12px;line-height:12px;color:#000;transform:scaleX(1.0050);">-40.0</span>
<span class="t" style="left:32.014506250000004px;top:327.54px;font-size:12px;line-height:12px;color:#000;transform:scaleX(1.0050);">-50.0</span>
<span class="t" style="left:32.014506250000004px;top:355.54px;font-size:12px;line-height:12px;color:#000;transform:scaleX(1.0050);">-60.0</span>
<span class="t" style="left:32.014506250000004px;top:383.54px;font-size:12px;line-height:12px;color:#000;transform:scaleX(1.0050);">-70.0</span>
<span class="t" style="left:32.014506250000004px;top:410.54px;font-size:12px;line-height:12px;color:#000;transform:scaleX(1.0050);">-80.0</span>
<span class="t" style="left:32.014506250000004px;top:438.54px;font-size:12px;line-height:12px;color:#000;transform:scaleX(1.0050);">-90.0</span>
<span class="t" style="left:25.308015625000003px;top:466.54px;font-size:12px;line-height:12px;color:#000;transform:scaleX(1.0050);">-100.0</span>
<span class="t" style="left:26.20309375px;top:493.54px;font-size:12px;line-height:12px;color:#000;transform:scaleX(1.0050);">-110.0</span>
<span class="t" style="left:25.308015625000003px;top:521.54px;font-size:12px;line-height:12px;color:#000;transform:scaleX(1.0050);">-120.0</span>
<span class="t" style="left:25.308015625000003px;top:549.54px;font-size:12px;line-height:12px;color:#000;transform:scaleX(1.0050);">-130.0</span>
<span class="t" style="left:25.308015625000003px;top:576.54px;font-size:12px;line-height:12px;color:#000;transform:scaleX(1.0050);">-140.0</span>
<span class="t" style="left:25.308015625000003px;top:604.54px;font-size:12px;line-height:12px;color:#000;transform:scaleX(1.0050);">-150.0</span>
<span class="t" style="left:25.308015625000003px;top:632.54px;font-size:12px;line-height:12px;color:#000;transform:scaleX(1.0050);">-160.0</span>
<span class="t" style="left:25.308015625000003px;top:659.54px;font-size:12px;line-height:12px;color:#000;transform:scaleX(1.0050);">-170.0</span>
<span class="t" style="left:10px;top:449px;font-size:13px;line-height:13px;color:#000;transform-origin:0 0;transform:rotate(-90deg) scaleX(1.07);">dBV rms</span>
<div style="left:67px;top:666px;width:849px;height:12px;background:#F6F5EF;background-image:repeating-conic-gradient(#ECE9D8 0% 25%,#fff 0% 50%);background-size:2px 2px;"></div>
<div class="sb" style="left:66px;top:666px;width:17px;height:12px;"></div>
<div class="sb" style="left:898px;top:666px;width:18px;height:12px;"></div>
<div class="sb" style="left:882px;top:666px;width:16px;height:12px;"></div>
<svg style="left:66px;top:666px" width="17" height="12" viewBox="0 0 17 12"><path d="M9.5 2.5V9.5L6 6Z" fill="#000"/></svg>
<svg style="left:898px;top:666px" width="18" height="12" viewBox="0 0 18 12"><path d="M7.5 2.5V9.5L11 6Z" fill="#000"/></svg>
<svg style="left:0;top:0" width="1024" height="700" viewBox="0 0 1024 700" shape-rendering="crispEdges"><rect x="66" y="678" width="1" height="3" fill="#000"/><rect x="135" y="678" width="1" height="3" fill="#000"/><rect x="176" y="678" width="1" height="3" fill="#000"/><rect x="205" y="678" width="1" height="3" fill="#000"/><rect x="227" y="678" width="1" height="3" fill="#000"/><rect x="245" y="678" width="1" height="3" fill="#000"/><rect x="261" y="678" width="1" height="3" fill="#000"/><rect x="274" y="678" width="1" height="3" fill="#000"/><rect x="286" y="678" width="1" height="3" fill="#000"/><rect x="296" y="678" width="1" height="3" fill="#000"/><rect x="366" y="678" width="1" height="3" fill="#000"/><rect x="407" y="678" width="1" height="3" fill="#000"/><rect x="435" y="678" width="1" height="3" fill="#000"/><rect x="458" y="678" width="1" height="3" fill="#000"/><rect x="476" y="678" width="1" height="3" fill="#000"/><rect x="492" y="678" width="1" height="3" fill="#000"/><rect x="505" y="678" width="1" height="3" fill="#000"/><rect x="517" y="678" width="1" height="3" fill="#000"/><rect x="527" y="678" width="1" height="3" fill="#000"/><rect x="597" y="678" width="1" height="3" fill="#000"/><rect x="637" y="678" width="1" height="3" fill="#000"/><rect x="666" y="678" width="1" height="3" fill="#000"/><rect x="689" y="678" width="1" height="3" fill="#000"/><rect x="707" y="678" width="1" height="3" fill="#000"/><rect x="722" y="678" width="1" height="3" fill="#000"/><rect x="736" y="678" width="1" height="3" fill="#000"/><rect x="748" y="678" width="1" height="3" fill="#000"/><rect x="758" y="678" width="1" height="3" fill="#000"/><rect x="828" y="678" width="1" height="3" fill="#000"/><rect x="868" y="678" width="1" height="3" fill="#000"/><rect x="897" y="678" width="1" height="3" fill="#000"/></svg>
<span class="t" style="left:58.926971875px;top:682.64px;font-size:12px;line-height:12px;color:#000;transform:scaleX(0.9850);">10</span>
<span class="t" style="left:127.92697187499999px;top:682.64px;font-size:12px;line-height:12px;color:#000;transform:scaleX(0.9850);">20</span>
<span class="t" style="left:168.926971875px;top:682.64px;font-size:12px;line-height:12px;color:#000;transform:scaleX(0.9850);">30</span>
<span class="t" style="left:219.926971875px;top:682.64px;font-size:12px;line-height:12px;color:#000;transform:scaleX(0.9850);">50</span>
<span class="t" style="left:253.926971875px;top:682.64px;font-size:12px;line-height:12px;color:#000;transform:scaleX(0.9850);">70</span>
<span class="t" style="left:285.6404578125px;top:682.64px;font-size:12px;line-height:12px;color:#000;transform:scaleX(0.9850);">100</span>
<span class="t" style="left:355.6404578125px;top:682.64px;font-size:12px;line-height:12px;color:#000;transform:scaleX(0.9850);">200</span>
<span class="t" style="left:396.6404578125px;top:682.64px;font-size:12px;line-height:12px;color:#000;transform:scaleX(0.9850);">300</span>
<span class="t" style="left:447.6404578125px;top:682.64px;font-size:12px;line-height:12px;color:#000;transform:scaleX(0.9850);">500</span>
<span class="t" style="left:481.6404578125px;top:682.64px;font-size:12px;line-height:12px;color:#000;transform:scaleX(0.9850);">700</span>
<span class="t" style="left:515.3301px;top:682.64px;font-size:12px;line-height:12px;color:#000;transform:scaleX(0.9850);">1.0k</span>
<span class="t" style="left:585.3301px;top:682.64px;font-size:12px;line-height:12px;color:#000;transform:scaleX(0.9850);">2.0k</span>
<span class="t" style="left:625.3301px;top:682.64px;font-size:12px;line-height:12px;color:#000;transform:scaleX(0.9850);">3.0k</span>
<span class="t" style="left:677.3301px;top:682.64px;font-size:12px;line-height:12px;color:#000;transform:scaleX(0.9850);">5.0k</span>
<span class="t" style="left:710.3301px;top:682.64px;font-size:12px;line-height:12px;color:#000;transform:scaleX(0.9850);">7.0k</span>
<span class="t" style="left:743.0435859375px;top:682.64px;font-size:12px;line-height:12px;color:#000;transform:scaleX(0.9850);">10.0k</span>
<span class="t" style="left:813.0435859375px;top:682.64px;font-size:12px;line-height:12px;color:#000;transform:scaleX(0.9850);">20.0k</span>
<span class="t" style="left:882.0435859375px;top:682.64px;font-size:12px;line-height:12px;color:#000;transform:scaleX(0.9850);">40.0k</span>
<span class="t" style="left:471px;top:695.14px;font-size:12px;line-height:12px;color:#000;transform:scaleX(0.9918);">Frequency (Hz)</span>
<div style="left:932px;top:696px;width:10px;height:10px;border:1px solid #000;background:#fff;"></div>
<div style="left:935px;top:700.5px;width:4px;height:1px;background:#000;"></div>
<div style="left:936.5px;top:699px;width:1px;height:4px;background:#000;"></div>
<div style="left:1008px;top:696px;width:10px;height:10px;border:1px solid #000;background:#fff;"></div>
<div style="left:1011px;top:700.5px;width:4px;height:1px;background:#000;"></div>
<span class="t" style="left:944px;top:154.84px;font-size:12px;line-height:12px;color:#000;transform:scaleX(0.9928);">Overlays</span>
<div style="left:944px;top:166px;width:47px;height:1px;background:#000;"></div>
<span class="t" style="left:925px;top:186px;font-size:12px;line-height:12px;color:#000;transform-origin:0 0;transform:rotate(-90deg) scaleX(.95);">Set</span>
<span class="t" style="left:940px;top:186px;font-size:12px;line-height:12px;color:#000;transform-origin:0 0;transform:rotate(-90deg) scaleX(.95);">On</span>
<div class="sb" style="left:923px;top:189px;width:14px;height:14px;"></div>
<span class="t" style="left:926.5px;top:190.24px;font-size:12px;line-height:12px;color:#000;">1</span>
<div class="chk" style="left:940px;top:189px;width:13px;height:13px;"></div>
<span class="t" style="left:956px;top:190.74px;font-size:12px;line-height:12px;color:#000;transform:scaleX(0.9465);">Overlay 1</span>
<div class="sb" style="left:923px;top:205px;width:14px;height:14px;"></div>
<span class="t" style="left:926.5px;top:206.24px;font-size:12px;line-height:12px;color:#000;">2</span>
<div class="chk" style="left:940px;top:205px;width:13px;height:13px;"></div>
<span class="t" style="left:956px;top:206.74px;font-size:12px;line-height:12px;color:#0000FF;transform:scaleX(0.9465);">Overlay 2</span>
<div class="sb" style="left:923px;top:221px;width:14px;height:14px;"></div>
<span class="t" style="left:926.5px;top:222.24px;font-size:12px;line-height:12px;color:#000;">3</span>
<div class="chk" style="left:940px;top:221px;width:13px;height:13px;"></div>
<span class="t" style="left:956px;top:222.74px;font-size:12px;line-height:12px;color:#400000;transform:scaleX(0.9465);">Overlay 3</span>
<div class="sb" style="left:923px;top:237px;width:14px;height:14px;"></div>
<span class="t" style="left:926.5px;top:238.24px;font-size:12px;line-height:12px;color:#000;">4</span>
<div class="chk" style="left:940px;top:237px;width:13px;height:13px;"></div>
<span class="t" style="left:956px;top:238.74px;font-size:12px;line-height:12px;color:#0000FF;transform:scaleX(0.9465);">Overlay 4</span>
<div class="sb" style="left:923px;top:253px;width:14px;height:14px;"></div>
<span class="t" style="left:926.5px;top:254.24px;font-size:12px;line-height:12px;color:#000;">5</span>
<div class="chk" style="left:940px;top:253px;width:13px;height:13px;"></div>
<span class="t" style="left:956px;top:254.74px;font-size:12px;line-height:12px;color:#008000;transform:scaleX(0.9465);">Overlay 5</span>
<div class="sb" style="left:923px;top:269px;width:14px;height:14px;"></div>
<span class="t" style="left:926.5px;top:270.24px;font-size:12px;line-height:12px;color:#000;">6</span>
<div class="chk" style="left:940px;top:269px;width:13px;height:13px;"></div>
<span class="t" style="left:956px;top:270.74px;font-size:12px;line-height:12px;color:#000;transform:scaleX(0.9465);">Overlay 6</span>
<div class="sb" style="left:923px;top:285px;width:14px;height:14px;"></div>
<span class="t" style="left:925.5px;top:286.24px;font-size:12px;line-height:12px;color:#000;">C</span>
<div class="chk" style="left:940px;top:285px;width:13px;height:13px;"></div>
<span class="t" style="left:956px;top:286.74px;font-size:12px;line-height:12px;color:#000;transform:scaleX(1.0461);">Composite</span>
<div class="sb" style="left:920px;top:302px;width:64px;height:18px;"></div>
<span class="t" style="left:926px;top:305.54px;font-size:12px;line-height:12px;color:#000;transform:scaleX(1.0126);">Options...</span>
<div style="left:435px;top:196px;width:200px;height:72px;background:#0855DD;border:1px solid #0831D9;"></div>
<div style="left:436px;top:197px;width:198px;height:20px;background:linear-gradient(180deg,#2B71E8 0,#0A5BE6 4px,#0651DB 12px,#0855DD 19px);"></div>
<span class="t" style="left:440px;top:203.69px;font-size:11px;line-height:11px;color:#fff;font-weight:bold;transform:scaleX(0.9732);">THD</span>
<div style="left:616px;top:202px;width:13px;height:13px;background:linear-gradient(135deg,#E8907A,#D0452A 60%,#B8371F);border:1px solid #fff;border-radius:2px;"></div>
<svg style="left:616px;top:202px" width="13" height="13" viewBox="0 0 13 13"><path d="M3.5 3.5L9.5 9.5M9.5 3.5L3.5 9.5" stroke="#fff" stroke-width="1.8" fill="none"/></svg>
<div style="left:439px;top:218px;width:192px;height:45px;background:#fff;border-top:1px solid #000;border-left:1px solid #000;"></div>
<span class="t" style="left:442px;top:226.37px;font-size:35px;line-height:35px;color:#000;transform:scaleX(1.0224);">0.035278 %</span>
<div style="left:693px;top:195px;width:204px;height:72px;background:#7A8FE0;border:1px solid #8597E0;"></div>
<div style="left:694px;top:196px;width:202px;height:20px;background:linear-gradient(180deg,#8FA4EA 0,#7D93E2 5px,#7488DC 19px);"></div>
<span class="t" style="left:697px;top:202.69px;font-size:11px;line-height:11px;color:#D8E0F6;font-weight:bold;transform:scaleX(1.0668);">Peak Frequency</span>
<div style="left:878px;top:201px;width:13px;height:13px;background:#B0607A;border:1px solid #E9E4F0;border-radius:2px;"></div>
<svg style="left:878px;top:201px" width="13" height="13" viewBox="0 0 13 13"><path d="M3.500 3.500L9.500 9.500M9.500 3.500L3.500 9.500" stroke="#fff" stroke-width="1.7" fill="none"/></svg>
<div style="left:697px;top:217px;width:196px;height:46px;background:#fff;border-top:1px solid #000;border-left:1px solid #000;"></div>
<span class="t" style="left:700px;top:225.13px;font-size:36px;line-height:36px;color:#000;transform:scaleX(0.9994);">59.326 Hz</span>
<span class="t" style="left:529.5px;top:337.57px;font-size:20px;line-height:20px;color:#000;transform:scaleX(1.0380);">YES-6</span>
<span class="t" style="left:529.5px;top:361.57px;font-size:20px;line-height:20px;color:#000;transform:scaleX(1.0264);">на клем. АС без ПОС</span>
<span class="t" style="left:886.5px;top:167.53px;font-size:26px;line-height:26px;color:#8A8A8A;font-weight:bold;font-style:italic;font-family:'Liberation Serif',serif;transform:scaleX(1.0029);">S</span>
<span class="t" style="left:900.5px;top:174.59px;font-size:19px;line-height:19px;color:#909090;font-style:italic;font-family:'Liberation Serif',serif;transform:scaleX(0.8189);">+</span>
<div style="left:0px;top:711px;width:1024px;height:27px;background:#ECE9D8;"></div>
<div style="left:2px;top:709px;width:1021px;height:2px;background:#fff;"></div>
<div style="left:0px;top:709px;width:1px;height:28px;background:#B5B2A1;"></div>
<div style="left:1px;top:709px;width:1px;height:28px;background:#A9A695;"></div>
<div class="stp" style="left:5px;top:713px;width:119px;height:18px;"></div>
<span class="t" style="left:8.7px;top:715.54px;font-size:12px;line-height:12px;color:#000;transform:scaleX(1.0000);">Stopped</span>
<div class="stp" style="left:125px;top:713px;width:102px;height:18px;"></div>
<span class="t" style="left:128.7px;top:715.54px;font-size:12px;line-height:12px;color:#000;transform:scaleX(1.0000);">Real Time</span>
<div class="stp" style="left:229px;top:713px;width:71px;height:18px;"></div>
<span class="t" style="left:232.7px;top:715.54px;font-size:12px;line-height:12px;color:#000;transform:scaleX(1.0000);">96000 Hz</span>
<div class="stp" style="left:301px;top:713px;width:51px;height:18px;"></div>
<span class="t" style="left:304.7px;top:715.54px;font-size:12px;line-height:12px;color:#000;transform:scaleX(1.0000);">24 Bit</span>
<div class="stp" style="left:354px;top:713px;width:51px;height:18px;"></div>
<span class="t" style="left:357.7px;top:715.54px;font-size:12px;line-height:12px;color:#000;transform:scaleX(1.0000);">Stereo</span>
<div class="stp" style="left:407px;top:713px;width:102px;height:18px;"></div>
<span class="t" style="left:410.7px;top:715.54px;font-size:12px;line-height:12px;color:#000;transform:scaleX(1.0000);">FFT 131072 pts</span>
<div class="stp" style="left:510px;top:713px;width:74px;height:18px;"></div>
<span class="t" style="left:513.7px;top:715.54px;font-size:12px;line-height:12px;color:#000;transform:scaleX(1.0000);">Hanning</span>
<div class="stp" style="left:586px;top:713px;width:434px;height:18px;"></div>
<div style="left:0px;top:737px;width:1024px;height:1px;background:#fff;"></div>
<div style="left:0px;top:738px;width:1024px;height:30px;background:linear-gradient(180deg,#3168D5 0,#4993E6 2px,#2663DB 5px,#2157D7 10px,#245DDB 22px,#2560DE 27px,#1F50C6 28.5px,#1941A5 30px);"></div>
<div style="left:0px;top:738px;width:96px;height:30px;background:radial-gradient(ellipse 60px 14px at 60px 18px,#48AA48 0,rgba(72,170,72,0) 100%),linear-gradient(180deg,#4E9A4C 0,#62B160 2px,#3F9E3E 5px,#3A9A3A 20px,#338E34 26px,#2B7A2C 30px);border-radius:0 9px 9px 0/0 13px 13px 0;box-shadow:1px 0 2px rgba(0,20,60,.6),inset 1px 0 1px rgba(20,80,20,.6);"></div>
<svg style="left:10px;top:743px" width="20" height="20" viewBox="-0.500 1 17.500 16.500">
<path d="M2 4Q5 2 8.500 4L7.500 9Q4.500 7 1 9Z" fill="#E8553A"/><path d="M9.500 4.500Q13 6 16.500 4L15.500 9Q12 11 8.500 9.500Z" fill="#7CC142"/>
<path d="M1 10Q4 8 7.500 10L6.500 15Q3.500 13 0 15Z" fill="#4A8BE8"/><path d="M8.500 10.500Q12 12 15.500 10L14.500 15Q11 17 7.500 15.500Z" fill="#F5C53A"/></svg>
<span class="t" style="left:35px;top:744.61px;font-size:17px;line-height:17px;color:#fff;font-weight:bold;font-style:italic;transform:scaleX(0.9761);text-shadow:1px 1px 1px rgba(0,0,0,.5);">пуск</span>
<div style="left:105px;top:741px;width:160px;height:25px;background:linear-gradient(180deg,#1C50B8 0,#1E52B7 100%);border-radius:3px;border:1px solid #16409A;box-shadow:inset 1px 1px 2px rgba(0,0,40,.4);"></div>
<svg style="left:116px;top:745px" width="16" height="16" viewBox="0 0 16 16" shape-rendering="crispEdges"><rect width="16" height="16" fill="#fff"/><path d="M0.500 0.500H15.500V15.500H0.500Z" fill="none" stroke="#222"/><path d="M4.500 1V9M8.500 1V9M12.500 1V9M1 4.500H15M1 8.500H15" stroke="#bbb" fill="none"/><polyline points="1,3 4,3 6,5 8,3 10,6 12,4 14,9" fill="none" stroke="#e22" stroke-width="1.1" shape-rendering="auto"/><polyline points="1,4 4,5 6,7 8,5 10,8 12,6 14,11" fill="none" stroke="#12e" stroke-width="1.2" shape-rendering="auto"/></svg>
<span class="t" style="left:118px;top:753.30px;font-size:8px;line-height:8px;color:#000;font-weight:bold;font-style:italic;font-family:'Liberation Serif',serif;transform:scaleX(1.0220);">SC</span>
<span class="t" style="left:135px;top:747.69px;font-size:11px;line-height:11px;color:#fff;transform:scaleX(0.9456);">SpectraPLUS-SC Sou...</span>
<div style="left:266px;top:741px;width:159px;height:25px;background:linear-gradient(180deg,#5A98F0 0,#3C81F0 3px,#3A7DEE 20px,#3573E0 25px);border-radius:3px;border:1px solid #2D62CE;box-shadow:1px 1px 1px rgba(10,30,120,.5);"></div>
<svg style="left:274px;top:744px" width="16" height="18" viewBox="0 0 16 18"><path d="M4.500 1L7 13" stroke="#D8432A" stroke-width="1.700"/><path d="M8 0.500L8 13" stroke="#E8B82A" stroke-width="1.700"/><path d="M11.500 1L9.500 13" stroke="#E8602A" stroke-width="1.700"/><path d="M13.500 3L10.500 12" stroke="#3C9A4A" stroke-width="1.400"/><path d="M2.500 4L5.500 12" stroke="#8A5A2A" stroke-width="1.300"/><path d="M3 6.500H13L11.500 17H4.500Z" fill="rgba(205,220,245,.55)" stroke="#B8C8E8" stroke-width=".9"/></svg>
<span class="t" style="left:294.3px;top:747.69px;font-size:11px;line-height:11px;color:#fff;transform:scaleX(0.9407);">60Гц с ПОС.PNG - Paint</span>
<div style="left:820px;top:745px;width:16px;height:16px;background:#3B6BD6;"></div>
<span class="t" style="left:821px;top:747.99px;font-size:11px;line-height:11px;color:#fff;transform:scaleX(0.8812);">RU</span>
<svg style="left:842px;top:747px" width="18" height="13" viewBox="0 0 18 12"><rect x="0.500" y="3.500" width="16" height="8" rx="1.500" fill="#fff" stroke="#222"/><path d="M3 6H14M3 8H14" stroke="#333" stroke-dasharray="1 1"/><path d="M5 10H12" stroke="#333"/><path d="M4 3Q6 0 9 1.500T13 1" fill="none" stroke="#222" stroke-width=".8" stroke-dasharray="1 1"/></svg>
<div style="left:878px;top:738px;width:146px;height:30px;background:linear-gradient(180deg,#1560CB 0,#1B8AE4 1.5px,#22A4F2 3px,#1797EA 6px,#108CE4 12px,#1393E8 22px,#1290E4 27px,#0E6FC4 30px);border-left:1px solid #0C5FB0;box-shadow:inset 1px 0 0 #3BB2F2;"></div>
<svg style="left:887px;top:743px" width="92" height="20" viewBox="0 0 92 20">
<rect x="7.5" y="1.500" width="9" height="8" fill="#5F6FB5" stroke="#1A2350"/><rect x="9" y="3" width="6" height="5" fill="#8FA0E0"/><rect x="1.500" y="6.500" width="10" height="8" fill="#2F3F86" stroke="#1A2350"/><rect x="3" y="8" width="7" height="5" fill="#5C70C0"/><rect x="3" y="15" width="7" height="2" fill="#A8ACC0"/><path d="M10 10.500L17 17.500M17 10.500L10 17.500" stroke="#E8201A" stroke-width="2.400"/>
<circle cx="28" cy="10" r="6.800" fill="#0B2A4D" stroke="#7CCBF6" stroke-width="2"/><path d="M24.800 11A3.400 3.400 0 1 1 29.500 13.500" fill="none" stroke="#173F6E" stroke-width="2.200"/><path d="M23.500 7.500Q25 4.500 28.500 4.300" fill="none" stroke="#DDF2FF" stroke-width="1.200"/><circle cx="32" cy="15" r="3.400" fill="#2B7FDC" stroke="#DDEBFA" stroke-width=".7"/><rect x="31.500" y="13.300" width="1.100" height="3.400" fill="#fff"/>
<ellipse cx="45" cy="8.500" rx="6.300" ry="7" fill="#A3A3A3" stroke="#3C3C3C" transform="rotate(-22 45 8.500)"/><ellipse cx="44.300" cy="8.300" rx="3.200" ry="3.700" fill="#4A4A4A" transform="rotate(-22 45 8.500)"/><ellipse cx="44" cy="8" rx="1.300" ry="1.600" fill="#888" transform="rotate(-22 45 8.500)"/><path d="M47 17Q51 18 53 13" stroke="#8D92C8" fill="none" stroke-width="1.200"/>
<path d="M57.500 10.500L66 6.500L70 13L61.500 17.500Z" fill="#C9C9BD" stroke="#2E2E2E"/><path d="M60 11.500L66 8.700M62.500 15L68.500 12" stroke="#666" stroke-width=".8"/><path d="M57 2H63.500V6.500L66 6.500L60.500 11L56 6.500L57 6.500Z" fill="#35B835" stroke="#176317" stroke-width=".7"/>
<circle cx="81.300" cy="10" r="8.300" fill="#27A058"/><path d="M76.500 13.500V11.500M79.500 13.500V9.500M82.500 13.500V7.500" stroke="#fff" stroke-width="1.700"/><circle cx="85.500" cy="14.800" r="3.800" fill="#7B2AA5"/><circle cx="85.500" cy="14.800" r="1.400" fill="#fff"/>
</svg>
<span class="t" style="left:983.7px;top:747.99px;font-size:11px;line-height:11px;color:#fff;transform:scaleX(0.9810);">16:38</span>
</body></html>
